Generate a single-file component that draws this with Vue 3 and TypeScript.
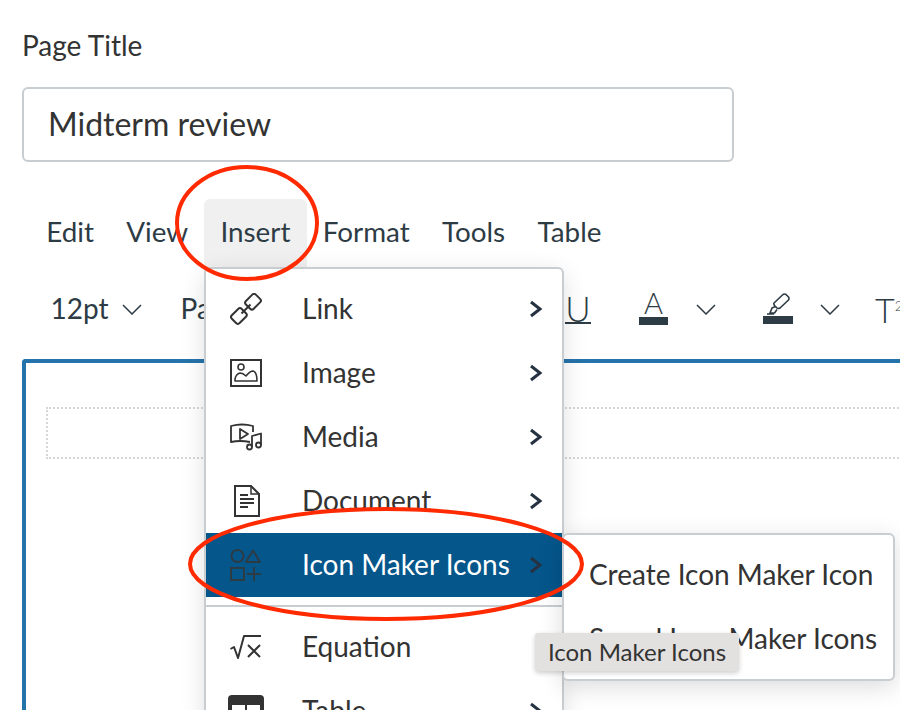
<script setup lang="ts">
interface MenuEntry { label: string; icon: string; active?: boolean }
const menuTabs: string[] = ['Edit', 'View', 'Insert', 'Format', 'Tools', 'Table']
const firstGroup: MenuEntry[] = [
  { label: 'Link', icon: 'link' },
  { label: 'Image', icon: 'image' },
  { label: 'Media', icon: 'media' },
  { label: 'Document', icon: 'document' },
  { label: 'Icon Maker Icons', icon: 'maker', active: true },
]
const secondGroup: MenuEntry[] = [
  { label: 'Equation', icon: 'equation' },
  { label: 'Table', icon: 'table' },
]
</script>

<template>
  <div class="page">
    <label class="field-label">Page Title</label>
    <div class="title-input">Midterm review</div>

    <nav class="menubar">
      <div v-for="tab in menuTabs" :key="tab" class="tab" :class="{ open: tab === 'Insert' }">
        {{ tab }}
        <div v-if="tab === 'Insert'" class="dropdown">
          <div
            v-for="entry in firstGroup"
            :key="entry.label"
            class="item"
            :class="{ active: entry.active }"
          >
            <span class="item-icon">
              <svg v-if="entry.icon === 'link'" width="32" height="32" viewBox="0 0 32 32" fill="none" stroke="#333" stroke-width="2">
                <rect x="1.900" y="17.500" width="14" height="11" rx="2.500" transform="rotate(-45 8.900 23)" />
                <rect x="16" y="3.200" width="14" height="11" rx="2.500" transform="rotate(-45 23 8.700)" />
                <path d="M11.500 20.500 L20.500 11.500" />
              </svg>
              <svg v-else-if="entry.icon === 'image'" width="32" height="28" viewBox="0 0 32 28" fill="none" stroke="#333" stroke-width="2">
                <rect x="1" y="1" width="30" height="26" />
                <circle cx="11" cy="8" r="3" stroke-width="1.600" />
                <path d="M5 22 V20 Q6 15 10 14 Q13 14 16 17 Q20 12 23 12 Q27 13 27 22 Z" stroke-width="1.600" stroke-linejoin="round" />
              </svg>
              <svg v-else-if="entry.icon === 'media'" width="32" height="28" viewBox="0 0 32 28" fill="none" stroke="#333" stroke-width="1.800" stroke-linejoin="round">
                <path d="M20 19 Q10 17 1 19 V3 Q12 0 23 3 V9" />
                <path d="M10 6 L18 11 L10 16 Z" />
                <circle cx="19.500" cy="24" r="2.500" />
                <circle cx="28.500" cy="22" r="2.500" />
                <path d="M22 24 V13 L31 10.500 V22" />
              </svg>
              <svg v-else-if="entry.icon === 'document'" class="doc-icon" width="26" height="32" viewBox="0 0 26 32" fill="none" stroke="#333" stroke-width="2">
                <path d="M1 1 H17 L25 9 V31 H1 Z" />
                <path d="M17 1 V9 H25" stroke-width="1.500" />
                <path d="M6 10 H14 M6 14 H20 M6 18 H20 M6 22 H14" stroke-width="1.800" />
              </svg>
              <svg v-else-if="entry.icon === 'maker'" width="31" height="32" viewBox="0 0 31 32" fill="none" stroke="#2d3b45" stroke-width="2">
                <circle cx="7.500" cy="7" r="6" />
                <path d="M23 1.500 L30 13 H16 Z" stroke-linejoin="round" />
                <rect x="1" y="19" width="13" height="12" />
                <path d="M17 25 H31 M24 18 V32" />
              </svg>
            </span>
            <span class="item-label">{{ entry.label }}</span>
            <svg class="chevron" width="14" height="18" viewBox="0 0 14 18" fill="none" stroke="#263242" stroke-width="3">
              <path d="M2 2 L11 9 L2 16" />
            </svg>
            <div v-if="entry.active" class="submenu">
              <div class="sub-item">Create Icon Maker Icon</div>
              <div class="sub-item">Saved Icon Maker Icons</div>
            </div>
          </div>
          <div class="separator"></div>
          <div v-for="entry in secondGroup" :key="entry.label" class="item">
            <span class="item-icon">
              <svg v-if="entry.icon === 'equation'" width="32" height="24" viewBox="0 0 32 24" fill="none" stroke="#333" stroke-width="2">
                <path d="M0.500 14 L4 12 L8 23 L14 1 H31" stroke-linejoin="round" />
                <path d="M18 10 L30 22 M30 10 L18 22" />
              </svg>
              <svg v-else-if="entry.icon === 'table'" class="table-icon" width="36" height="32" viewBox="0 0 36 32">
                <rect width="36" height="32" rx="4" fill="#333" />
                <rect x="4" y="10" width="13" height="22" fill="#fff" />
                <rect x="19" y="10" width="13" height="22" fill="#fff" />
              </svg>
            </span>
            <span class="item-label">{{ entry.label }}</span>
            <svg v-if="entry.icon === 'table'" class="chevron" width="14" height="18" viewBox="0 0 14 18" fill="none" stroke="#263242" stroke-width="3">
              <path d="M2 2 L11 9 L2 16" />
            </svg>
          </div>
        </div>
      </div>
    </nav>

    <div class="toolbar">
      <span class="tool-text size">12pt</span>
      <svg class="caret caret-size" width="20" height="11" viewBox="0 0 20 11" fill="none" stroke="#2d3b45" stroke-width="1.500"><path d="M1 1 L10 10 L19 1" /></svg>
      <span class="tool-text para">Paragraph</span>
      <span class="underline-tool">U</span>
      <span class="color-tool">A<i class="swatch"></i></span>
      <svg class="caret caret-color" width="20" height="11" viewBox="0 0 20 11" fill="none" stroke="#2d3b45" stroke-width="1.500"><path d="M1 1 L10 10 L19 1" /></svg>
      <span class="highlight-tool">
        <svg width="24" height="22" viewBox="0 0 24 22" fill="none" stroke="#2d3b45" stroke-width="1.600" stroke-linejoin="round">
          <path d="M8 10 L17 1.500 Q18.500 0.500 20 1.500 L22.500 4 Q23.500 5.500 22.500 7 L14 15 Q12 16 11 15 L8.500 12.500 Q7.500 11 8 10 Z" />
          <path d="M9.500 13.500 L6 15 L4 20 L8.500 20 L11 16.500 M1 21 H8" />
        </svg>
        <i class="swatch wide"></i>
      </span>
      <svg class="caret caret-hl" width="20" height="11" viewBox="0 0 20 11" fill="none" stroke="#2d3b45" stroke-width="1.500"><path d="M1 1 L10 10 L19 1" /></svg>
      <span class="super-tool">T<sup>2</sup></span>
    </div>

    <div class="editor">
      <div class="placeholder"></div>
    </div>

    <div class="tooltip">Icon Maker Icons</div>

    <svg class="marks" width="900" height="710" viewBox="0 0 900 710" fill="none" stroke="#ff2a00" stroke-width="4">
      <ellipse cx="247" cy="223" rx="70" ry="56" />
      <ellipse cx="386" cy="564" rx="196" ry="55" />
    </svg>
  </div>
</template>

<style>
html, body { margin: 0; overflow: hidden; background: #fff; }
</style>

<style scoped>
.page {
  position: relative;
  width: 900px;
  height: 710px;
  overflow: hidden;
  box-sizing: border-box;
  padding: 28px 0 0 22px;
  display: flex;
  flex-direction: column;
  font-family: Lato, "Open Sans", sans-serif;
  color: #333;
}
.field-label {
  font-size: 28px;
  line-height: 34px;
  height: 34px;
  color: #333;
}
.title-input {
  margin-top: 25px;
  box-sizing: border-box;
  width: 712px;
  height: 75px;
  flex: none;
  border: 2px solid #c7cdd1;
  border-radius: 6px;
  padding-left: 24px;
  font-size: 32px;
  line-height: 69px;
  color: #333;
}
.menubar {
  display: flex;
  margin: 37px 0 0 8px;
  height: 68px;
  flex: none;
}
.tab {
  position: relative;
  padding: 0 16.200px;
  height: 68px;
  line-height: 66px;
  font-size: 27.800px;
  color: #2d3b45;
  border-radius: 6px 6px 0 0;
}
.tab.open { background: #f0f0f0; }
.dropdown {
  position: absolute;
  top: 68px;
  left: -0.300px;
  z-index: 5;
  box-sizing: border-box;
  width: 360px;
  height: 520px;
  background: #fff;
  border: 2px solid #c7cdd1;
  border-radius: 6px;
  padding-top: 8px;
  box-shadow: 0 6px 24px rgba(0, 0, 0, 0.12);
  color: #333;
}
.item {
  position: relative;
  display: flex;
  align-items: center;
  height: 64px;
  line-height: 62px;
  padding: 0 19px 0 24px;
}
.item.active { background: #04568b; color: #fff; }
.item-icon {
  width: 36px;
  margin-right: 36px;
  display: flex;
  align-items: center;
  flex: none;
}
.doc-icon { margin-left: 4px; }
.table-icon { margin-left: -2px; }
.item-label { font-size: 28px; margin-top: -2px; }
.chevron { margin-left: auto; }
.separator { height: 2px; background: #c7cdd1; margin: 8px 0; }
.submenu {
  position: absolute;
  left: 356px;
  top: 0;
  z-index: 6;
  box-sizing: border-box;
  width: 333px;
  height: 148px;
  background: #fff;
  border: 2px solid #c7cdd1;
  border-radius: 6px;
  box-shadow: 0 6px 24px rgba(0, 0, 0, 0.14);
  color: #333;
  padding: 8px 0 0 25px;
}
.sub-item {
  height: 64px;
  line-height: 62px;
  font-size: 28px;
  white-space: nowrap;
}
.toolbar {
  display: flex;
  align-items: center;
  height: 64px;
  margin-top: 10px;
  flex: none;
  color: #2d3b45;
  white-space: nowrap;
}
.toolbar > * { flex: none; }
.tool-text { font-size: 28px; line-height: 60px; margin-top: -2px; }
.size { margin-left: 28.500px; }
.caret-size { margin-left: 13px; }
.para { margin-left: 39px; width: 384.500px; overflow: hidden; }
.underline-tool {
  font-size: 35px;
  font-weight: 300;
  line-height: 31px;
  height: 29px;
  width: 26px;
  text-align: center;
  border-bottom: 2px solid #2d3b45;
  margin-top: -2px;
}
.color-tool {
  margin-left: 48px;
  width: 29px;
  font-size: 29px;
  font-weight: 300;
  line-height: 24px;
  text-align: center;
  display: flex;
  flex-direction: column;
  align-items: center;
  margin-top: -2px;
}
.swatch { display: block; width: 29px; height: 8px; background: #2d3b45; margin-top: 2px; }
.swatch.wide { width: 30px; margin-top: 1px; }
.caret-color { margin-left: 28px; }
.highlight-tool {
  margin-left: 47px;
  width: 30px;
  display: flex;
  flex-direction: column;
  align-items: center;
  margin-top: -2px;
}
.caret-hl { margin-left: 27px; }
.super-tool {
  margin-left: 35px;
  font-size: 34px;
  font-weight: 300;
}
.super-tool sup { font-size: 14px; }
.editor {
  margin-top: 18px;
  box-sizing: border-box;
  width: 900px;
  height: 400px;
  flex: none;
  border: 4px solid #2573ab;
  border-right: 0;
  border-bottom: 0;
  border-radius: 4px 0 0 0;
  padding: 44px 0 0 20px;
}
.placeholder {
  height: 52px;
  box-sizing: border-box;
  border: 2px dotted #d5d8da;
  border-right: 0;
}
.tooltip {
  position: absolute;
  left: 535px;
  top: 633px;
  z-index: 8;
  box-sizing: border-box;
  width: 204px;
  height: 38px;
  background: #e3e1df;
  border-radius: 3px;
  box-shadow: 0 2px 5px rgba(0, 0, 0, 0.2);
  font-size: 24px;
  line-height: 38px;
  text-align: center;
  color: #333;
}
.marks { position: absolute; left: 0; top: 0; z-index: 7; pointer-events: none; }
</style>
